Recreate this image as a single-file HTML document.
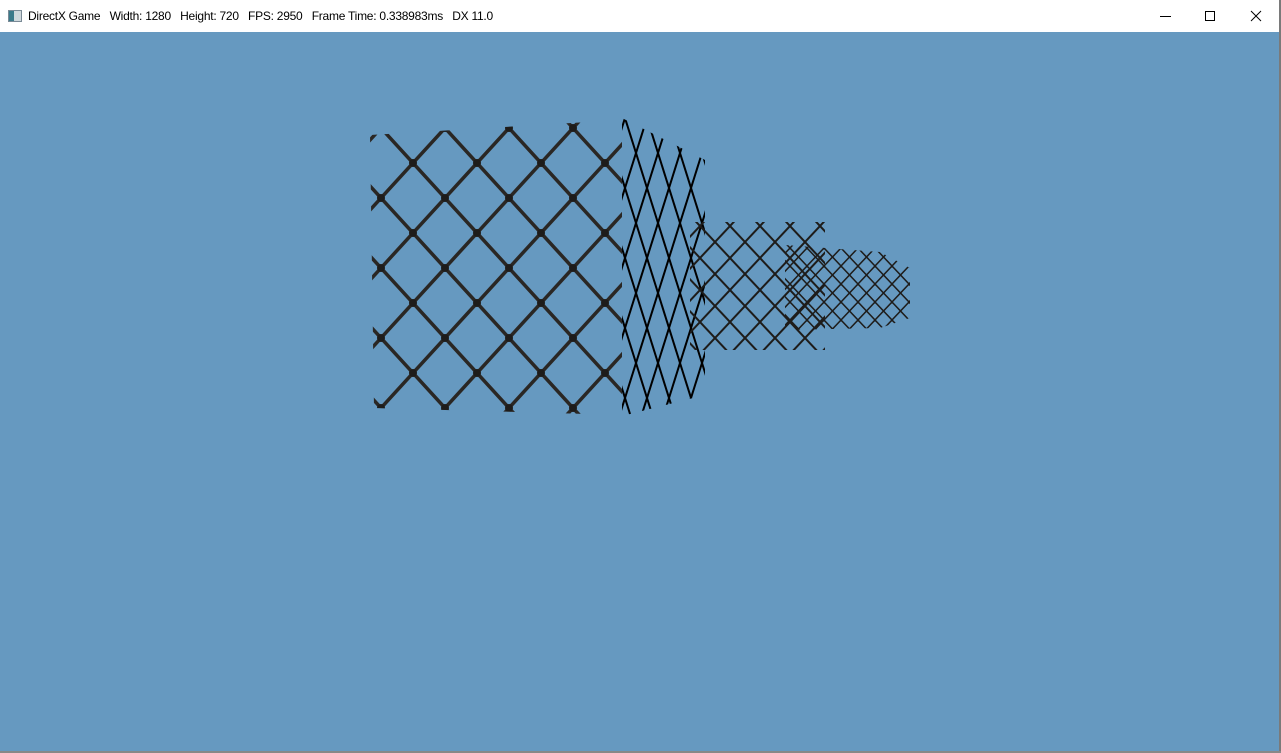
<!DOCTYPE html>
<html><head><meta charset="utf-8"><style>
html,body{margin:0;padding:0;width:1281px;height:753px;overflow:hidden;background:#6699c0;font-family:"Liberation Sans",sans-serif}
#bar{position:absolute;left:0;top:0;width:1279px;height:32px;background:#fff}
#t{position:absolute;left:28px;top:9px;font-size:12px;color:#000;white-space:pre;letter-spacing:-0.25px}
#ic{position:absolute;left:8px;top:10px;width:12px;height:10px;border:1px solid #7a8a96;background:linear-gradient(90deg,#3b7a8a 40%,#cfd8dc 40%)}
#rb{position:absolute;left:1279px;top:0;width:2px;height:753px;background:#7a7a7a}
#bb{position:absolute;left:0;top:751px;width:1281px;height:2px;background:#888}
svg{position:absolute;left:0;top:0}
</style></head><body>
<div id="bar"><div id="ic"></div><div id="t">DirectX Game   Width: 1280   Height: 720   FPS: 2950   Frame Time: 0.338983ms   DX 11.0</div>
<svg width="1279" height="32" style="left:0;top:0"><g stroke="#000" stroke-width="1" fill="none">
<line x1="1160" y1="16.5" x2="1171" y2="16.5"/><rect x="1205.5" y="11.5" width="9" height="9"/>
<line x1="1251" y1="11" x2="1261" y2="21"/><line x1="1261" y1="11" x2="1251" y2="21"/></g></svg>
</div>
<div id="rb"></div><div id="bb"></div>
<svg width="1281" height="753">
<defs>
<pattern id="p1" x="381" y="128" width="64" height="70" patternUnits="userSpaceOnUse">
<g stroke="#2a2724" stroke-width="3.5"><line x1="0" y1="0" x2="64" y2="70"/><line x1="64" y1="0" x2="0" y2="70"/></g>
<g fill="#1e1c1a"><circle cx="0" cy="0" r="4"/><circle cx="64" cy="0" r="4"/><circle cx="0" cy="70" r="4"/><circle cx="64" cy="70" r="4"/><circle cx="32" cy="35" r="4"/></g>
</pattern>
<pattern id="p2" x="625" y="118" width="22" height="70" patternUnits="userSpaceOnUse">
<g stroke="#000" stroke-width="2"><line x1="0" y1="0" x2="22" y2="70"/><line x1="22" y1="0" x2="0" y2="70"/></g>
</pattern>
<pattern id="p3" x="700" y="226" width="30" height="32" patternUnits="userSpaceOnUse">
<g stroke="#1e1c1a" stroke-width="2"><line x1="0" y1="0" x2="30" y2="32"/><line x1="30" y1="0" x2="0" y2="32"/></g>
</pattern>
<pattern id="p4" x="790" y="248" width="17" height="18" patternUnits="userSpaceOnUse">
<g stroke="#1e1c1a" stroke-width="1.5"><line x1="0" y1="0" x2="17" y2="18"/><line x1="17" y1="0" x2="0" y2="18"/></g>
</pattern>
</defs>
<polygon points="370,135 622,120 622,415 374,408" fill="url(#p1)"/>
<polygon points="622,118 705,160 705,395 622,416" fill="url(#p2)"/>
<polygon points="690,222 825,222 825,350 690,350" fill="url(#p3)"/>
<polygon points="785,245 880,252 910,268 910,318 880,328 785,330" fill="url(#p4)"/>
</svg>
</body></html>
